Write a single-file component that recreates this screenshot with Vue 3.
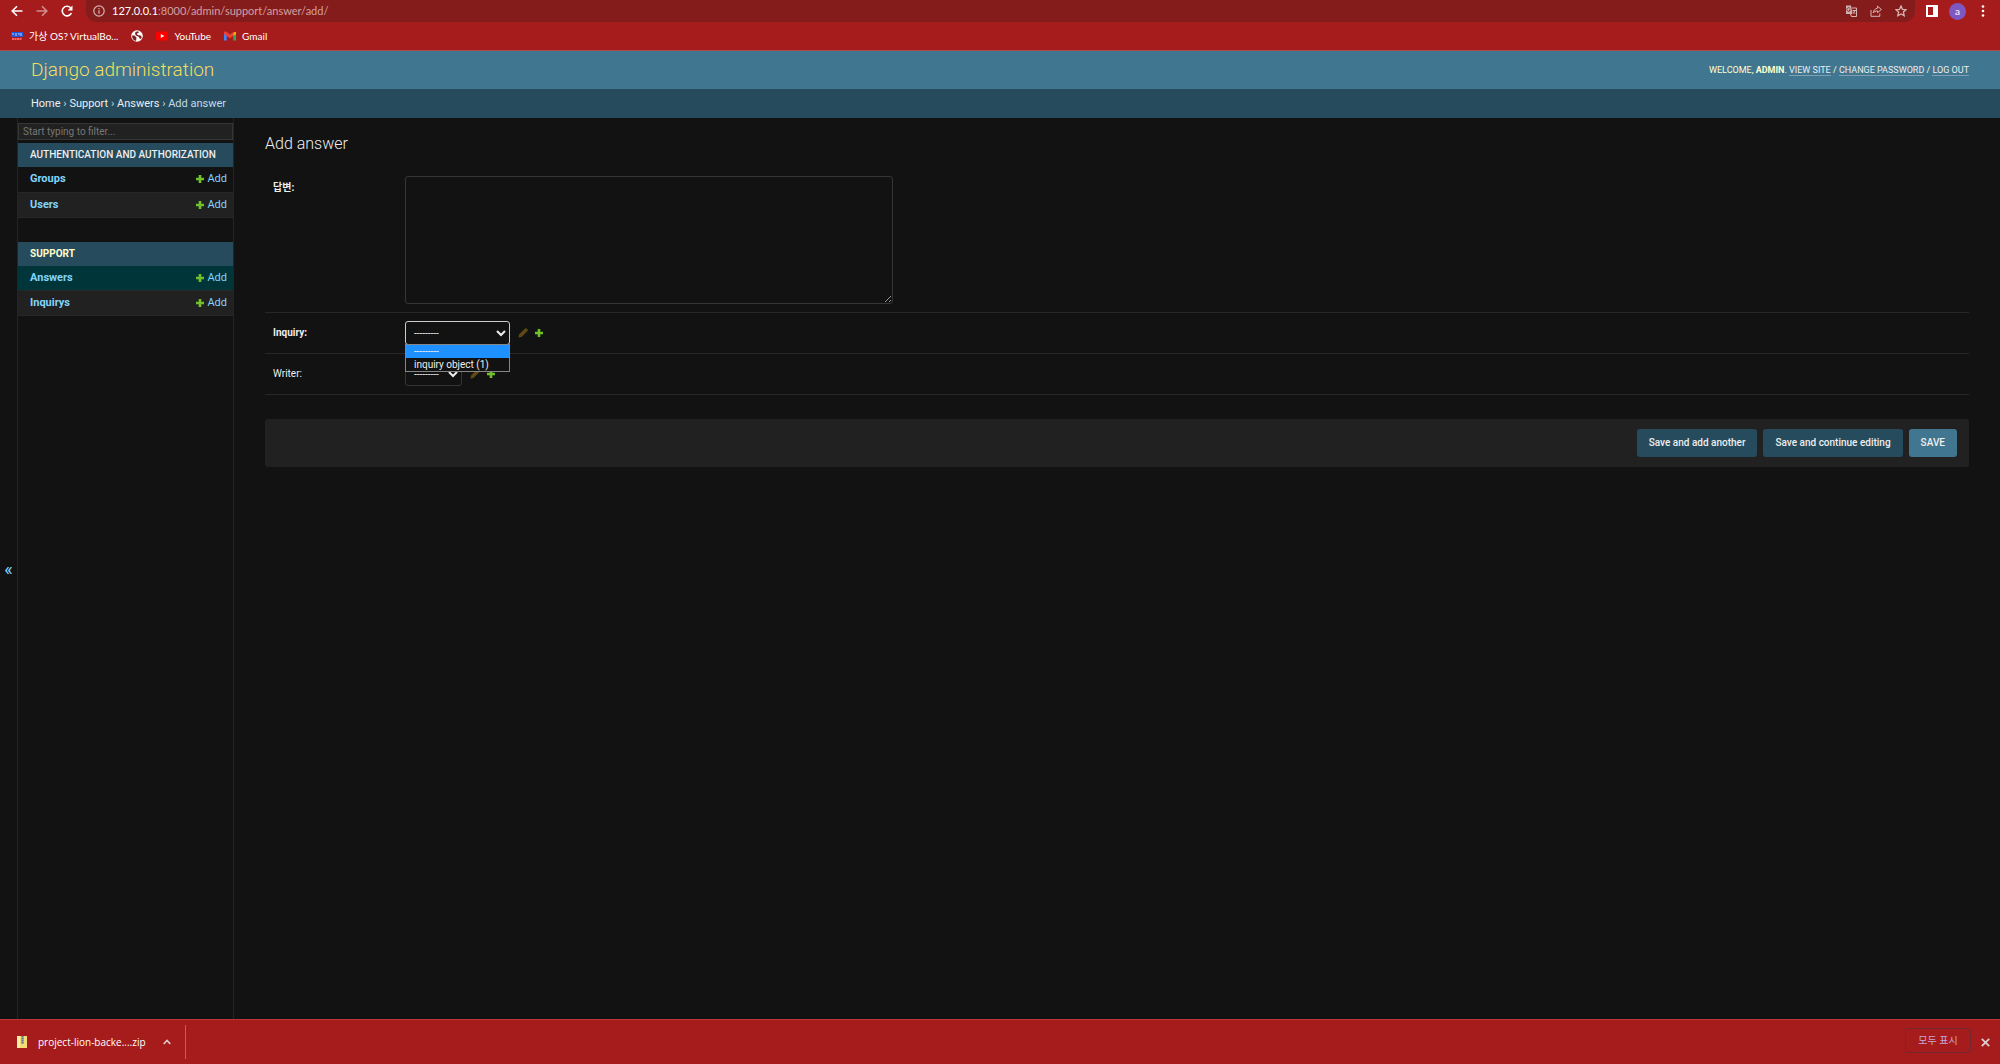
<template>
  <div class="window">
    <header class="browser">
      <div class="toolbar">
        <button class="icon-btn nav" aria-label="Back">
          <svg viewBox="0 0 12 12" width="12" height="12"><path d="M11.5 6H1.5M6 1.2 1.2 6 6 10.8" /></svg>
        </button>
        <button class="icon-btn nav dim" aria-label="Forward">
          <svg viewBox="0 0 12 12" width="12" height="12"><path d="M.5 6h10M6 1.2 10.8 6 6 10.8" /></svg>
        </button>
        <button class="icon-btn nav" aria-label="Reload">
          <svg viewBox="0 0 12 12" width="12" height="12">
            <path d="M10.4 8A4.8 4.8 0 1 1 9.6 2.8" />
            <path class="solid" d="M11.5.5v5H6.6z" />
          </svg>
        </button>
        <div class="omnibox">
          <svg class="info" viewBox="0 0 12 12" width="12" height="12">
            <circle cx="6" cy="6" r="5.2" />
            <path d="M6 5.3v3.4M6 3.1v1.2" />
          </svg>
          <span class="url"><b>127.0.0.1</b>:8000/admin/support/answer/add/</span>
          <div class="omni-actions">
            <svg viewBox="0 0 12 12" width="12" height="12">
              <path class="fill" d="M1 .5h5L7.500 9H1z" />
              <path d="M7 3h4.500v8.500H6.500L5.500 9" />
              <path class="cut" d="M5.200 3.600A1.800 1.800 0 1 0 5.400 5H4" />
              <path d="M7.500 5.500h3.500M10 5.500c-.2 1.300-1 2.300-2 3M8 6.500l2.200 2.200" />
            </svg>
            <svg viewBox="0 0 12 12" width="12" height="12">
              <path d="M1 5v6.300h8.800V8.500" />
              <path d="M7.500 1.200 11.400 4.500 7.500 7.700V5.900C5.500 5.900 4.200 6.600 3.200 8c.3-2.600 1.800-4.300 4.300-4.800z" />
            </svg>
            <svg viewBox="0 0 12 12" width="12" height="12">
              <path class="star" d="m6 1 1.500 3.300 3.600.4-2.700 2.400.8 3.600L6 8.900l-3.200 1.800.8-3.600L.9 4.700l3.600-.4z" />
            </svg>
          </div>
        </div>
        <button class="icon-btn panel" aria-label="Side panel">
          <svg viewBox="0 0 12 12" width="12" height="12"><path d="M0 0h12v12H0zM2 2v8h5V2z" fill="#fff" fill-rule="evenodd" /></svg>
        </button>
        <button class="avatar">a</button>
        <button class="icon-btn menu" aria-label="Menu">
          <svg viewBox="0 0 4 12" width="4" height="12">
            <circle cx="2" cy="1.500" r="1.300" /><circle cx="2" cy="6" r="1.300" /><circle cx="2" cy="10.500" r="1.300" />
          </svg>
        </button>
      </div>
      <nav class="bookmarks">
        <a href="#">
          <svg viewBox="0 0 12 10" width="12" height="10">
            <path d="M0 1h12v5H0z" fill="#2456d8" />
            <path d="M1 3h2M5 2v3M7 3h2M10 2v3" stroke="#bcd0ff" />
            <path d="M1 8h10" stroke="#ff6262" stroke-width="2" stroke-dasharray="2 .5" />
          </svg>
          가상 OS? VirtualBo...
        </a>
        <a href="#" aria-label="Bookmark">
          <svg viewBox="0 0 12 12" width="12" height="12">
            <circle cx="6" cy="6" r="5.800" fill="#fff" />
            <path d="M1 5.500h2.500l2 2-.5 3.500C2.500 10.500 1 8.500 1 5.500zM4.500 2 7 1.200l1 1.300-2 1 .5 1.500 3 .5 1.300 1.500-.8 2-1.500-.5-.5-1.500L5 5.500 4 4z" fill="#7c2222" />
          </svg>
        </a>
        <a href="#">
          <svg viewBox="0 0 12 12" width="12" height="12">
            <rect y="1.500" width="12" height="9" rx="2.500" fill="#f00" />
            <path d="m4.800 4 3.500 2-3.500 2z" fill="#fff" />
          </svg>
          YouTube
        </a>
        <a href="#">
          <svg viewBox="0 0 12 10" width="12" height="10">
            <path d="M0 1.500v8h2.700V4z" fill="#4285f4" />
            <path d="M12 1.500v8H9.300V4z" fill="#34a853" />
            <path d="M9.300 1.500 12 1v2L9.300 5z" fill="#fbbc04" />
            <path d="M0 1.500C0 .5 1.500 0 2.300.8L6 3.600 9.300 1v3.800L6 7.200 0 3z" fill="#ea4335" />
          </svg>
          Gmail
        </a>
      </nav>
    </header>

    <div class="site-header">
      <h1>Django administration</h1>
      <div class="user-tools">
        Welcome, <strong>admin</strong>.
        <a href="#">View site</a> / <a href="#">Change password</a> / <a href="#">Log out</a>
      </div>
    </div>
    <nav class="breadcrumbs">
      <a href="#">Home</a> › <a href="#">Support</a> › <a href="#">Answers</a> › Add answer
    </nav>

    <div class="main">
      <button class="toggle" aria-label="Toggle navigation">«</button>
      <nav class="sidebar">
        <input v-model="filter" type="search" placeholder="Start typing to filter..." aria-label="Filter navigation items" />
        <table v-for="app in apps" :key="app.name">
          <caption :class="{ current: app.current }"><a href="#">{{ app.name }}</a></caption>
          <tbody>
            <tr v-for="model in app.models" :key="model.name" :class="{ current: model.current }">
              <th scope="row"><a href="#">{{ model.name }}</a></th>
              <td>
                <a href="#">
                  <svg class="plus" viewBox="0 0 8 8" width="8" height="8"><path d="M2.700 0h2.600v2.700H8v2.600H5.300V8H2.700V5.300H0V2.700h2.700z" /></svg>
                  Add
                </a>
              </td>
            </tr>
          </tbody>
        </table>
      </nav>

      <main class="content">
        <h2>Add answer</h2>
        <form @submit.prevent>
          <div class="form-row">
            <label class="required" for="answer">답변:</label>
            <textarea id="answer"></textarea>
          </div>
          <div class="form-row">
            <label class="required" for="inquiry">Inquiry:</label>
            <div class="related">
              <div class="select-box">
                <select id="inquiry" class="wide open">
                  <option>---------</option>
                  <option>inquiry object (1)</option>
                </select>
                <ul class="options">
                  <li class="selected">---------</li>
                  <li>inquiry object (1)</li>
                </ul>
              </div>
              <svg class="pencil" viewBox="0 0 10 10" width="10" height="10"><path d="M.5 9.500 1 6.500 6.500 1Q8-.3 9.200 1T9 3.500L3.500 9z" /></svg>
              <a href="#" aria-label="Add another inquiry">
                <svg class="plus" viewBox="0 0 8 8" width="8" height="8"><path d="M2.700 0h2.600v2.700H8v2.600H5.300V8H2.700V5.300H0V2.700h2.700z" /></svg>
              </a>
            </div>
          </div>
          <div class="form-row">
            <label for="writer">Writer:</label>
            <div class="related">
              <select id="writer">
                <option>---------</option>
              </select>
              <svg class="pencil" viewBox="0 0 10 10" width="10" height="10"><path d="M.5 9.500 1 6.500 6.500 1Q8-.3 9.200 1T9 3.500L3.500 9z" /></svg>
              <a href="#" aria-label="Add another writer">
                <svg class="plus" viewBox="0 0 8 8" width="8" height="8"><path d="M2.700 0h2.600v2.700H8v2.600H5.300V8H2.700V5.300H0V2.700h2.700z" /></svg>
              </a>
            </div>
          </div>
          <div class="submit-row">
            <button>Save and add another</button>
            <button>Save and continue editing</button>
            <button class="default">SAVE</button>
          </div>
        </form>
      </main>
    </div>

    <footer class="downloads">
      <div class="file">
        <svg viewBox="0 0 12 14" width="12" height="14">
          <path d="M1 1h10v12H1z" fill="#f5dc77" />
          <path d="M1 1h3v12H1z" fill="#fff0a0" />
          <path d="M5 1h3v8H5z" fill="#9aa3a8" />
          <path d="M6.500 1v8" stroke="#5d6c78" stroke-dasharray="1 1" />
        </svg>
        <span>project-lion-backe....zip</span>
        <button class="icon-btn" aria-label="Download options">
          <svg viewBox="0 0 8 6" width="8" height="6"><path d="M.7 5 4 1.500 7.300 5" /></svg>
        </button>
      </div>
      <button class="show-all">모두 표시</button>
      <button class="icon-btn close" aria-label="Close">
        <svg viewBox="0 0 8 8" width="9" height="9"><path d="m.7.7 6.600 6.600M7.300.7.700 7.300" /></svg>
      </button>
    </footer>
  </div>
</template>

<script setup>
import { ref } from 'vue'

const filter = ref('')

const apps = [
  {
    name: 'Authentication and Authorization',
    models: [{ name: 'Groups' }, { name: 'Users' }],
  },
  {
    name: 'Support',
    current: true,
    models: [{ name: 'Answers', current: true }, { name: 'Inquirys' }],
  },
]
</script>

<style>
body { background: #121212; }
</style>

<style scoped>
* { box-sizing: border-box; }

.window {
  display: flex;
  flex-direction: column;
  min-height: 100vh;
  color: #eee;
  font: 11px/14px Roboto, "Noto Sans CJK KR", sans-serif;
  color-scheme: dark;
}
a { color: inherit; text-decoration: none; }
button { font: inherit; color: inherit; border: 0; padding: 0; background: none; cursor: pointer; }
svg { display: block; flex: none; }

/* browser chrome */
.browser {
  background: #a61c1c;
  border-bottom: 1px solid #b24a4a;
  font-family: Lato, "Noto Sans CJK KR", sans-serif;
  color: #fff;
}
.toolbar { display: flex; align-items: center; height: 22px; padding: 0 15px 0 11px; }
.icon-btn svg { fill: none; stroke: #fff; stroke-width: 1.6; }
.icon-btn.nav { margin-right: 13px; }
.icon-btn.dim { opacity: .5; }
.icon-btn .solid { fill: #fff; stroke: none; }
.omnibox {
  flex: 1;
  display: flex;
  align-items: center;
  height: 22px;
  padding: 0 8px 0 7px;
  background: #841c1c;
  border-radius: 0 0 11px 11px;
}
.info { fill: none; stroke: #d8b5b5; stroke-width: 1.2; }
.url { margin-left: 7px; color: #d2a0a0; font-size: 11px; }
.url b { color: #fff; font-weight: 400; }
.omni-actions { display: flex; gap: 13px; margin-left: auto; }
.omni-actions svg { fill: none; stroke: #d8b5b5; stroke-width: 1; }
.omni-actions .fill { fill: #cdb0b0; stroke: none; }
.omni-actions .cut { stroke: #841c1c; stroke-width: .8; }
.omni-actions .star { stroke-width: 1.3; }
.panel { margin-left: 11px; }
.icon-btn.panel svg { stroke: none; }
.avatar {
  width: 17px;
  height: 17px;
  margin: 0 15px 0 11px;
  border-radius: 50%;
  background: #7e57c2;
  font-size: 10px;
  line-height: 15px;
}
.icon-btn.menu svg { fill: #fff; stroke: none; }
.bookmarks { display: flex; align-items: center; gap: 13px; height: 28px; padding: 0 11px; font-size: 10px; }
.bookmarks a { display: flex; align-items: center; gap: 6px; }

/* django header */
.site-header {
  display: flex;
  align-items: center;
  justify-content: space-between;
  height: 38px;
  padding: 0 31px;
  background: #417690;
  color: #ffc;
}
h1 { margin: 0; color: #f5dd5d; font-size: 19px; font-weight: 300; line-height: 24px; }
.user-tools { font-size: 9px; text-transform: uppercase; }
.user-tools a { color: #eee; border-bottom: 1px solid #7fa0b2; }
.breadcrumbs { height: 29px; padding: 8px 31px 7px; background: #264b5d; color: #c4dce8; }
.breadcrumbs a { color: #eee; }

.main { flex: 1; display: flex; }
.toggle { width: 18px; border-right: 1px solid #242424; color: #81d4fa; font-size: 18px; }

.sidebar { width: 216px; padding-top: 5px; border-right: 1px solid #242424; }
.sidebar input {
  display: block;
  width: 100%;
  height: 17px;
  margin: 0 0 3px;
  padding: 0 4px;
  border: 1px solid #353535;
  background: #212121;
  font: inherit;
  font-size: 10px;
  appearance: none;
}
.sidebar input::placeholder { color: #777; }
.sidebar table { width: 100%; margin-bottom: 24px; border-collapse: collapse; }
caption {
  padding: 5px 12px;
  background: #264b5d;
  font-size: 10px;
  font-weight: 500;
  text-align: left;
  text-transform: uppercase;
}
caption.current { color: #ffc; font-weight: 700; }
tr { background: #121212; border-bottom: 1px solid #272727; }
tr:nth-child(even) { background: #212121; }
tr.current { background: #00363a; }
th, td { height: 25px; padding: 0 6px 0 12px; color: #81d4fa; text-align: left; }
td a { display: flex; align-items: center; justify-content: flex-end; gap: 3px; }
.plus { fill: #70bf2b; }

/* change form */
.content { flex: 1; padding: 17px 31px 31px; }
h2 { margin: 0 0 15px; font-size: 16px; font-weight: 300; line-height: 18px; }
.form-row { display: flex; padding: 8px; border-bottom: 1px solid #272727; }
.form-row label { width: 132px; padding-top: 5px; font-size: 10px; }
.form-row .required { font-weight: 700; }
textarea {
  width: 488px;
  height: 128px;
  border: 1px solid #353535;
  border-radius: 3px;
  background: #121212;
}
.related { display: flex; align-items: center; font-size: 10px; }
.select-box { position: relative; }
select {
  display: block;
  width: 57px;
  height: 24px;
  padding: 0 4px;
  border: 1px solid #353535;
  border-radius: 3px;
  background: #121212;
  color: #eee;
  font: inherit;
}
select.wide { width: 105px; }
select.open { border-color: #ccc; }
.options {
  position: absolute;
  z-index: 1;
  top: 23px;
  left: 0;
  width: 105px;
  margin: 0;
  padding: 0;
  border: 1px solid #858585;
  background: #121212;
  list-style: none;
}
.options li { height: 13px; padding: 0 8px; line-height: 13px; }
.options .selected { background: #1e90ff; }
.pencil { margin: 0 7px 0 8px; fill: #5e4a12; }

.submit-row {
  display: flex;
  justify-content: flex-end;
  gap: 6px;
  margin-top: 24px;
  padding: 10px 12px;
  border-radius: 3px;
  background: #212121;
}
.submit-row button { height: 28px; padding: 0 12px; border-radius: 3px; background: #264b5d; font-size: 10px; font-weight: 500; }
.submit-row .default { background: #417690; }

/* download shelf */
.downloads {
  display: flex;
  align-items: center;
  height: 45px;
  padding: 0 10px 0 16px;
  border-top: 1px solid #c03434;
  background: #a61c1c;
  color: #fff;
  font-family: "Open Sans", "Noto Sans CJK KR", sans-serif;
  font-size: 10px;
}
.file { display: flex; align-items: center; height: 34px; padding-right: 14px; border-right: 1px solid #c65d5d; }
.file span { margin: 0 17px 0 10px; }
.downloads .icon-btn svg { stroke: #dcc; }
.show-all {
  width: 66px;
  height: 25px;
  margin: 0 10px 4px auto;
  border: 1px solid #74282e;
  border-radius: 3px;
  color: #c9a5d6;
}
</style>
